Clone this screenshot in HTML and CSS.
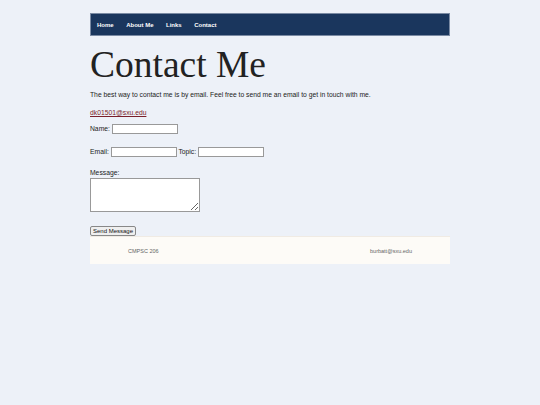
FILE: index.html
```html
<!DOCTYPE html>
<html>
<head>
<meta charset="utf-8">
<link rel="stylesheet" href="styles.css">
</head>
<body>
<div class="page">
  <nav class="nav">
    <a href="#">Home</a>
    <a href="#">About Me</a>
    <a href="#">Links</a>
    <a href="#">Contact</a>
  </nav>
  <h1 class="title">Contact Me</h1>
  <p class="intro">The best way to contact me is by email. Feel free to send me an email to get in touch with me.</p>
  <p class="mail"><a href="#">dk01501@sxu.edu</a></p>
  <form class="form">
    <div class="row">Name: <input type="text" class="inp"></div>
    <div class="row">Email: <input type="text" class="inp"> Topic: <input type="text" class="inp"></div>
    <div class="row msg">Message:<br><textarea class="ta"></textarea></div>
    <div class="row send"><button type="button" class="btn">Send Message</button></div>
  </form>
  <footer class="foot">
    <span>CMPSC 206</span>
    <span>burbatt@sxu.edu</span>
  </footer>
</div>
</body>
</html>
```
FILE: styles.css
```css
html, body { margin: 0; padding: 0; background: #edf1f8; }
body { font-family: "Liberation Sans", Arial, sans-serif; font-size: 6.75px; color: #222; }
.page { width: 360px; margin: 0 auto; padding-top: 13px; }
.nav { background: #1a365d; border: 1px solid #7a8aa3; height: 21px; display: flex; align-items: center; padding-left: 6px; }
.nav a { color: #fff; font-weight: bold; font-size: 6px; text-decoration: none; margin-right: 12.5px; }
.title { font-family: "Liberation Serif", "Times New Roman", serif; font-weight: normal; font-size: 37.5px; color: #222; margin: 9px 0 0 0; line-height: 40px; }
.intro { margin: 5px 0 0 0; line-height: 9px; }
.mail { margin: 9px 0 0 0; line-height: 9px; }
.mail a { color: #7a1f2a; }
.form { margin-top: 6px; }
.row { line-height: 12px; margin-bottom: 11px; display: block; }
.inp { width: 62px; height: 6px; font-size: 6px; padding: 1px; border: 1px solid #999; background: #fff; vertical-align: middle; }
.msg { line-height: 8px; margin-bottom: 14px; }
.ta { width: 106px; height: 30px; border: 1px solid #999; background: #fff; margin-top: 1px; padding: 1px; display: block; }
.send { margin-bottom: 0; line-height: 10px; }
.btn { font-family: "Liberation Sans", Arial, sans-serif; font-size: 6px; padding: 1px 2px; border: 1px solid #888; border-radius: 2px; background: #efefef; color: #111; }
.foot { background: #fdfbf7; height: 27px; display: flex; align-items: center; justify-content: space-between; padding: 0 38px; font-size: 5.5px; color: #666; border-top: 1px solid #f0ebe4; margin-top: 0; }
```
